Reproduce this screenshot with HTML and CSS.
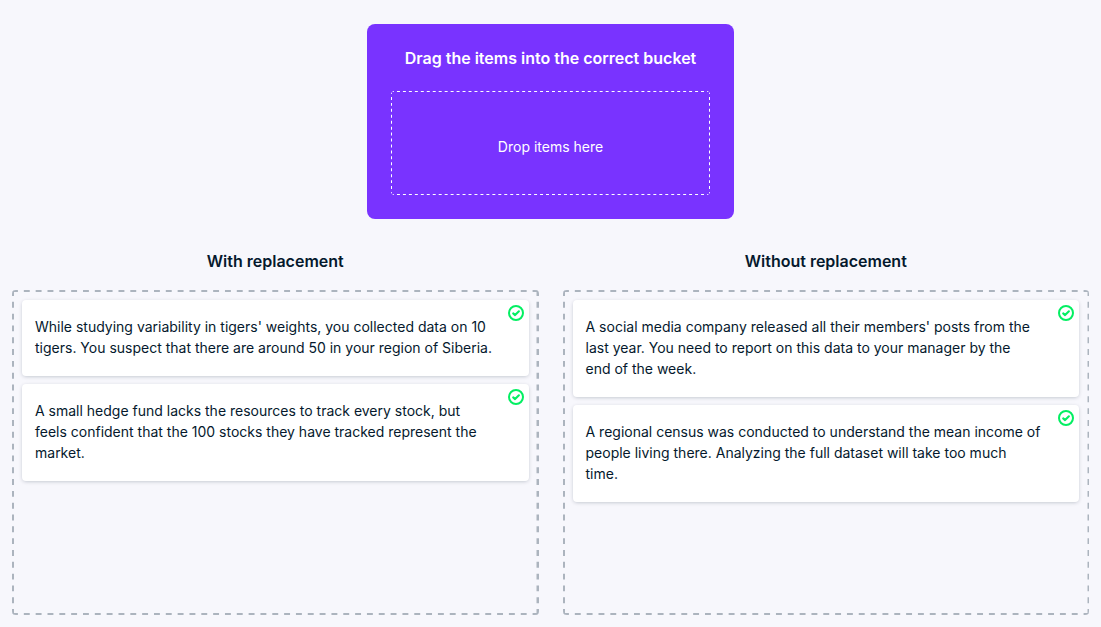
FILE: index.html
```html
<!DOCTYPE html>
<html lang="en">
<head>
<meta charset="utf-8">
<meta name="viewport" content="width=device-width, initial-scale=1">
<title>Drag the items into the correct bucket</title>
<link rel="stylesheet" href="styles.css">
</head>
<body>
<svg class="sprite" aria-hidden="true">
  <symbol id="check" viewBox="0 0 16 16">
    <circle cx="8" cy="8" r="7" fill="none" stroke="currentColor" stroke-width="2"/>
    <path d="M5.2 8.4 7.1 10.1 10.9 6.3" fill="none" stroke="currentColor" stroke-width="2.1" stroke-linecap="round" stroke-linejoin="round"/>
  </symbol>
</svg>
<main class="exercise">
  <section class="source">
    <h1 class="source-title">Drag the items into the correct bucket</h1>
    <div class="dropzone">
      <svg class="dashes dashes-thin" aria-hidden="true">
        <line x1="0" y1="0" x2="100%" y2="0" pathLength="107"/>
        <line x1="0" y1="100%" x2="100%" y2="100%" pathLength="107"/>
        <line x1="0" y1="0" x2="0" y2="100%" pathLength="35"/>
        <line x1="100%" y1="0" x2="100%" y2="100%" pathLength="35"/>
      </svg>
      Drop items here
    </div>
  </section>
  <div class="buckets">
    <section class="bucket">
      <h2 class="bucket-title">With replacement</h2>
      <div class="bucket-body">
        <svg class="dashes" aria-hidden="true">
          <line x1="0" y1="0" x2="100%" y2="0" pathLength="89"/>
          <line x1="0" y1="100%" x2="100%" y2="100%" pathLength="89"/>
          <line x1="0" y1="0" x2="0" y2="100%" pathLength="55"/>
          <line x1="100%" y1="0" x2="100%" y2="100%" pathLength="55"/>
        </svg>
        <ul class="bucket-items">
          <li class="item" draggable="true">While studying variability in tigers' weights, you collected data on 10 tigers. You suspect that there are around 50 in your region of Siberia.<svg class="item-icon" role="img" aria-label="Correct"><use href="#check"/></svg></li>
          <li class="item" draggable="true">A small hedge fund lacks the resources to track every stock, but feels confident that the 100 stocks they have tracked represent the market.<svg class="item-icon" role="img" aria-label="Correct"><use href="#check"/></svg></li>
        </ul>
      </div>
    </section>
    <section class="bucket">
      <h2 class="bucket-title">Without replacement</h2>
      <div class="bucket-body">
        <svg class="dashes" aria-hidden="true">
          <line x1="0" y1="0" x2="100%" y2="0" pathLength="89"/>
          <line x1="0" y1="100%" x2="100%" y2="100%" pathLength="89"/>
          <line x1="0" y1="0" x2="0" y2="100%" pathLength="55"/>
          <line x1="100%" y1="0" x2="100%" y2="100%" pathLength="55"/>
        </svg>
        <ul class="bucket-items">
          <li class="item" draggable="true">A social media company released all their members' posts from the last year. You need to report on this data to your manager by the <br>end of the week.<svg class="item-icon" role="img" aria-label="Correct"><use href="#check"/></svg></li>
          <li class="item" draggable="true">A regional census was conducted to understand the mean income of people living there. Analyzing the full dataset will take too much <br>time.<svg class="item-icon" role="img" aria-label="Correct"><use href="#check"/></svg></li>
        </ul>
      </div>
    </section>
  </div>
</main>
</body>
</html>
```

FILE: styles.css
```css
* {
  box-sizing: border-box;
}

body {
  margin: 0;
  background: #f7f7fc;
  color: #05192d;
  font-family: Inter, "Liberation Sans", sans-serif;
  font-size: 14px;
  line-height: 21px;
}

.sprite {
  position: absolute;
  width: 0;
  height: 0;
}

.exercise {
  display: flex;
  flex-direction: column;
  align-items: center;
  gap: 32px;
  min-height: 100vh;
  padding: 24px 12px 12px;
}

.source {
  display: flex;
  flex-direction: column;
  gap: 23px;
  width: 33.333vw;
  min-width: 340px;
  padding: 24px;
  border-radius: 8px;
  background: #7933ff;
  color: #fff;
  text-align: center;
}

.source-title,
.bucket-title {
  margin: 0;
  font-size: 16px;
  font-weight: 600;
  line-height: 20px;
  text-align: center;
}

.dropzone {
  position: relative;
  display: flex;
  align-items: center;
  justify-content: center;
  min-height: 104px;
  padding-top: 6px;
}

/* Dashed outline: every side starts and ends on a dash */
.dashes {
  position: absolute;
  inset: 0;
  width: 100%;
  height: 100%;
  border-radius: 4px;
  overflow: hidden;
  stroke: #acb4be;
  stroke-width: 4px;
  stroke-dasharray: 1 1;
  pointer-events: none;
}

.dashes-thin {
  stroke: #fff;
  stroke-width: 2px;
}

.buckets {
  display: grid;
  flex: 1;
  grid-template-columns: 1fr 1fr;
  gap: 24px;
  width: 100%;
}

.bucket {
  display: flex;
  flex-direction: column;
  gap: 19px;
}

.bucket-body {
  position: relative;
  flex: 1;
  padding: 10px;
}

.bucket-items {
  display: flex;
  flex-direction: column;
  gap: 8px;
  margin: 0;
  padding: 0;
  list-style: none;
}

.item {
  position: relative;
  padding: 16px 36px 18px 13px;
  border-radius: 4px;
  background: #fff;
  box-shadow: 0 1px 4px -1px rgba(5, 25, 45, 0.3);
  cursor: grab;
}

.item-icon {
  position: absolute;
  top: 5px;
  right: 5px;
  width: 16px;
  height: 16px;
  color: #03ef62;
}
```
